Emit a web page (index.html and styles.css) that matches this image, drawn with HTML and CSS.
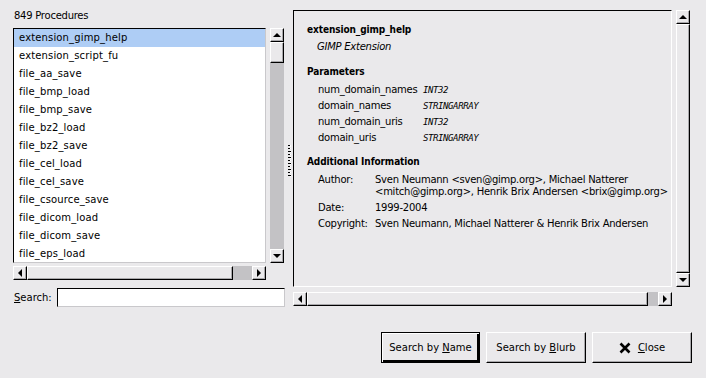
FILE: index.html
```html
<!DOCTYPE html>
<html lang="en">
<head>
    <meta charset="UTF-8">
    <title>Procedure Browser</title>
    <link rel="stylesheet" href="styles.css">
</head>
<body>
  <div class="dialog">
    <div class="left">
      <div class="count">849 Procedures</div>

      <div class="listwrap">
        <ul class="list">
          <li class="sel">extension_gimp_help</li>
          <li>extension_script_fu</li>
          <li>file_aa_save</li>
          <li>file_bmp_load</li>
          <li>file_bmp_save</li>
          <li>file_bz2_load</li>
          <li>file_bz2_save</li>
          <li>file_cel_load</li>
          <li>file_cel_save</li>
          <li>file_csource_save</li>
          <li>file_dicom_load</li>
          <li>file_dicom_save</li>
          <li>file_eps_load</li>
        </ul>
        <div class="vscroll">
          <div class="arrow up"></div>
          <div class="trough"><div class="thumb list-thumb"></div></div>
          <div class="arrow down"></div>
        </div>
        <div class="hscroll">
          <div class="arrow left-a"></div>
          <div class="trough"><div class="thumb list-hthumb"></div></div>
          <div class="arrow right-a"></div>
        </div>
      </div>

      <div class="search">
        <label for="q"><u>S</u>earch:</label>
        <input type="text" id="q">
      </div>
    </div>

    <div class="handle"><div class="grip"></div></div>

    <div class="right">
      <div class="infowrap">
        <div class="info">
          <div class="name">extension_gimp_help</div>
          <div class="blurb">GIMP Extension</div>

          <div class="head">Parameters</div>
          <table class="params">
            <tr><td>num_domain_names</td><td class="type">INT32</td></tr>
            <tr><td>domain_names</td><td class="type">STRINGARRAY</td></tr>
            <tr><td>num_domain_uris</td><td class="type">INT32</td></tr>
            <tr><td>domain_uris</td><td class="type">STRINGARRAY</td></tr>
          </table>

          <div class="head extra">Additional Information</div>
          <table class="meta">
            <tr><td>Author:</td><td>Sven Neumann &lt;sven@gimp.org&gt;, Michael Natterer<br>&lt;mitch@gimp.org&gt;, Henrik Brix Andersen &lt;brix@gimp.org&gt;</td></tr>
            <tr><td>Date:</td><td>1999-2004</td></tr>
            <tr><td>Copyright:</td><td>Sven Neumann, Michael Natterer &amp; Henrik Brix Andersen</td></tr>
          </table>
        </div>
        <div class="vscroll">
          <div class="arrow up"></div>
          <div class="trough"><div class="thumb full"></div></div>
          <div class="arrow down"></div>
        </div>
        <div class="hscroll">
          <div class="arrow left-a"></div>
          <div class="trough"><div class="thumb info-hthumb"></div></div>
          <div class="arrow right-a"></div>
        </div>
      </div>
    </div>
  </div>

  <div class="buttons">
    <button class="default"><span>Search by <u>N</u>ame</span></button>
    <button><span>Search by <u>B</u>lurb</span></button>
    <button class="close">
      <svg width="12" height="12" viewBox="0 0 12 12"><path d="M1.5 1.5 L10.5 10.5 M10.5 1.5 L1.5 10.5" stroke="#000" stroke-width="2.6"/></svg>
      <span><u>C</u>lose</span>
    </button>
  </div>
</body>
</html>
```

FILE: styles.css
```css
* {
    margin: 0;
    padding: 0;
    box-sizing: border-box;
}

body {
    width: 706px;
    height: 378px;
    background-color: #eae9eb;
    font-family: "DejaVu Sans", sans-serif;
    font-size: 10px;
    color: #000;
    overflow: hidden;
}

.dialog {
    display: grid;
    grid-template-columns: 272px 8px 397px;
    padding-left: 13px;
}

.count {
    height: 28px;
    line-height: 12px;
    padding: 10px 0 0 1px;
    letter-spacing: -0.25px;
}

.listwrap {
    display: grid;
    grid-template-columns: 253px 14px;
    grid-template-rows: 235px 14px;
    column-gap: 4px;
    row-gap: 3px;
}

.list {
    list-style: none;
    background: #fff;
    border: 1px solid #000;
    border-right-color: #c9c8cb;
    border-bottom-color: #c9c8cb;
    overflow: hidden;

    li {
        height: 18px;
        line-height: 18px;
        padding-left: 5px;
        white-space: nowrap;
        letter-spacing: 0.15px;
    }

    .sel {
        background-color: #aecdf5;
    }
}

/* scrollbars */
.vscroll, .hscroll {
    display: flex;
    background: #c3c2c5;
}

.vscroll {
    flex-direction: column;
}

.trough {
    flex: 1;
    display: flex;
    flex-direction: column;
}

.hscroll .trough {
    flex-direction: row;
}

.arrow, .thumb {
    background: #eae9eb;
    border: 1px solid;
    border-color: #fff #000 #000 #fff;
    box-shadow: inset -1px -1px #a9a8ab;
}

.arrow {
    width: 14px;
    height: 14px;
    flex: none;
    display: flex;
    align-items: center;
    justify-content: center;

    &::after {
        content: "";
        width: 0;
        height: 0;
        border: 4px solid transparent;
    }
}

.up::after   { border-bottom: 4px solid #000; border-top-width: 0; margin-top: -1px; }
.down::after { border-top: 4px solid #000; border-bottom-width: 0; }
.left-a::after  { border-right: 4px solid #000; border-left-width: 0; }
.right-a::after { border-left: 4px solid #000; border-right-width: 0; }

.list-thumb  { height: 21px; }
.full        { flex: 1; }
.list-hthumb { width: 206px; }
.info-hthumb { width: 341px; }

.search {
    display: flex;
    align-items: center;
    margin-top: 8px;
    height: 19px;

    label {
        width: 44px;
        padding-left: 1px;
    }

    input {
        width: 228px;
        height: 19px;
        background: #fff;
        border: 1px solid #000;
        border-right-color: #c9c8cb;
        border-bottom-color: #c9c8cb;
    }
}

.handle .grip {
    margin: 145px 0 0 3px;
    width: 3px;
    height: 32px;
    background: repeating-linear-gradient(#000 0 1px, transparent 1px 3px);
    border-right: 1px dotted #fff;
}

.right {
    padding-top: 10px;
}

.infowrap {
    display: grid;
    grid-template-columns: 379px 14px;
    grid-template-rows: 277px 14px;
    column-gap: 4px;
    row-gap: 5px;
}

.info {
    border: 1px solid #000;
    border-right-color: #fff;
    border-bottom-color: #fff;
    padding: 13px 0 0 13px;
    line-height: 12px;
    overflow: hidden;
    white-space: nowrap;
    letter-spacing: -0.25px;

    .name, .head {
        font-family: "DejaVu Sans Condensed", "DejaVu Sans", sans-serif;
        font-weight: bold;
        letter-spacing: -0.1px;
    }

    .blurb {
        font-style: italic;
        margin: 5px 0 0 10px;
    }

    .head {
        margin-top: 13px;
    }

    .extra {
        margin-top: 12px;
    }

    table {
        border-spacing: 0 4px;
        margin: 2px 0 -4px 11px;
    }

    td {
        padding: 0;
        vertical-align: top;
    }
}

.params td:first-child {
    width: 105px;
}

.params .type {
    font-family: "DejaVu Sans Mono", monospace;
    font-style: italic;
    font-size: 9px;
    letter-spacing: -0.4px;
}

.meta td:first-child {
    width: 57px;
}

.buttons {
    display: flex;
    justify-content: flex-end;
    gap: 6px;
    margin-top: 25px;
    padding-right: 14px;

    button {
        width: 100px;
        height: 31px;
        font-family: "DejaVu Sans", sans-serif;
        font-size: 10px;
        background: #eae9eb;
        border: 1px solid;
        border-color: #fff #000 #000 #fff;
        box-shadow: inset -1px -1px #a9a8ab;
        display: flex;
        align-items: center;
        justify-content: center;
    }

    .default {
        width: 99px;
        border-color: #000;
        box-shadow: inset 1px 1px #fff, inset -2px -2px #000;
    }

    .close {
        gap: 7px;
    }
}
```
